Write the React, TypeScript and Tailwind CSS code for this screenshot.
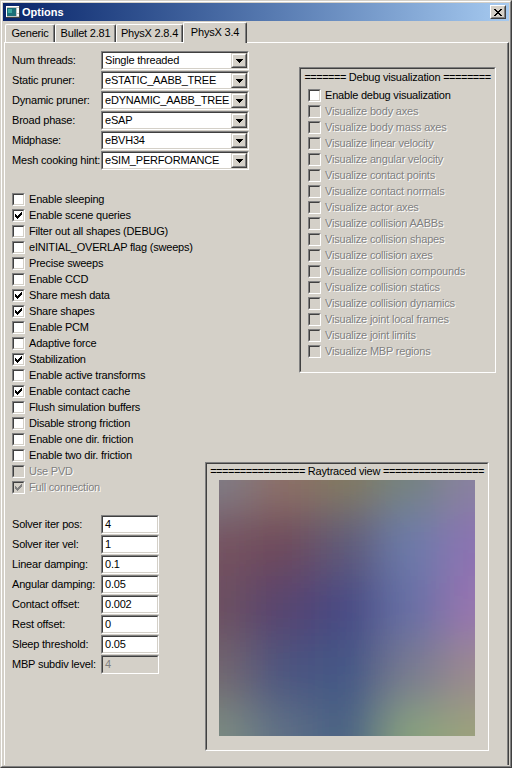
import React from 'react';

const COMBOS = [
  { label: 'Num threads:', value: 'Single threaded' },
  { label: 'Static pruner:', value: 'eSTATIC_AABB_TREE' },
  { label: 'Dynamic pruner:', value: 'eDYNAMIC_AABB_TREE' },
  { label: 'Broad phase:', value: 'eSAP' },
  { label: 'Midphase:', value: 'eBVH34' },
  { label: 'Mesh cooking hint:', value: 'eSIM_PERFORMANCE' },
];

const OPTIONS = [
  { label: 'Enable sleeping' },
  { label: 'Enable scene queries', checked: true },
  { label: 'Filter out all shapes (DEBUG)' },
  { label: 'eINITIAL_OVERLAP flag (sweeps)' },
  { label: 'Precise sweeps' },
  { label: 'Enable CCD' },
  { label: 'Share mesh data', checked: true },
  { label: 'Share shapes', checked: true },
  { label: 'Enable PCM' },
  { label: 'Adaptive force' },
  { label: 'Stabilization', checked: true },
  { label: 'Enable active transforms' },
  { label: 'Enable contact cache', checked: true },
  { label: 'Flush simulation buffers' },
  { label: 'Disable strong friction' },
  { label: 'Enable one dir. friction' },
  { label: 'Enable two dir. friction' },
  { label: 'Use PVD', disabled: true },
  { label: 'Full connection', checked: true, disabled: true },
];

const EDITS = [
  { label: 'Solver iter pos:', value: '4' },
  { label: 'Solver iter vel:', value: '1' },
  { label: 'Linear damping:', value: '0.1' },
  { label: 'Angular damping:', value: '0.05' },
  { label: 'Contact offset:', value: '0.002' },
  { label: 'Rest offset:', value: '0' },
  { label: 'Sleep threshold:', value: '0.05' },
  { label: 'MBP subdiv level:', value: '4', disabled: true },
];

const DEBUG = [
  'Visualize body axes',
  'Visualize body mass axes',
  'Visualize linear velocity',
  'Visualize angular velocity',
  'Visualize contact points',
  'Visualize contact normals',
  'Visualize actor axes',
  'Visualize collision AABBs',
  'Visualize collision shapes',
  'Visualize collision axes',
  'Visualize collision compounds',
  'Visualize collision statics',
  'Visualize collision dynamics',
  'Visualize joint local frames',
  'Visualize joint limits',
  'Visualize MBP regions',
];

// rough colour samples of the rendered frame, blurred together below
const RAY = [
  ['#807d86', '#8e7068', '#827a60', '#748480', '#8a82a0'],
  ['#765260', '#6e4a5a', '#5e5a78', '#6c7caa', '#8c72b2'],
  ['#6c5060', '#564270', '#464884', '#6670a6', '#9874b0'],
  ['#726670', '#4c5480', '#425686', '#787a90', '#9c8a90'],
  ['#7c8c82', '#5e7086', '#4a6284', '#88a27e', '#9ca27c'],
];

const CHECK = ['......#', '.....##', '#...###', '##.###.', '#####..', '.###...', '..#....'];
const ARROW = ['#######', '.#####.', '..###..', '...#...'];
const CROSS = ['##....##', '.##..##.', '..####..', '...##...', '..####..', '.##..##.', '##....##'];

function Pixels({ rows, color }: { rows: string[]; color: string }) {
  const w = rows[0].length;
  const h = rows.length;
  return (
    <svg width={w} height={h} viewBox={`0 0 ${w} ${h}`} shapeRendering="crispEdges">
      {rows.flatMap((row, y) =>
        row.split('').map((c, x) =>
          c === '#' ? <rect key={`${x}-${y}`} x={x} y={y} width={1} height={1} fill={color} /> : null
        )
      )}
    </svg>
  );
}

function Check({ label, checked, disabled }: { label: string; checked?: boolean; disabled?: boolean }) {
  return (
    <div className="flex h-[16px] items-center whitespace-nowrap">
      <div className="h-[13px] w-[13px] shrink-0 border border-t-[#808080] border-l-[#808080] border-r-white border-b-white">
        <div
          className={
            disabled
              ? 'flex h-full w-full items-center justify-center border border-t-[#404040] border-l-[#404040] border-r-[#d4d0c8] border-b-[#d4d0c8] bg-[#d4d0c8]'
              : 'flex h-full w-full items-center justify-center border border-t-[#404040] border-l-[#404040] border-r-[#d4d0c8] border-b-[#d4d0c8] bg-white'
          }
        >
          {checked && <Pixels rows={CHECK} color={disabled ? '#808080' : '#000000'} />}
        </div>
      </div>
      <span className={disabled ? 'ml-[4px] text-[#808080] [text-shadow:1px_1px_0_#ffffff]' : 'ml-[4px]'}>{label}</span>
    </div>
  );
}

function Combo({ value }: { value: string }) {
  return (
    <div className="h-[19px] w-[148px] shrink-0 border border-t-[#808080] border-l-[#808080] border-r-white border-b-white">
      <div className="flex h-full items-center border border-t-[#404040] border-l-[#404040] border-r-[#d4d0c8] border-b-[#d4d0c8] bg-white">
        <span className="flex-1 overflow-hidden whitespace-nowrap pl-[2px]">{value}</span>
        <div className="h-full w-[16px] border border-t-[#d4d0c8] border-l-[#d4d0c8] border-r-[#404040] border-b-[#404040]">
          <div className="flex h-full items-center justify-center border border-t-white border-l-white border-r-[#808080] border-b-[#808080] bg-[#d4d0c8]">
            <Pixels rows={ARROW} color="#000000" />
          </div>
        </div>
      </div>
    </div>
  );
}

function Edit({ value, disabled }: { value: string; disabled?: boolean }) {
  return (
    <div className="h-[19px] w-[58px] shrink-0 border border-t-[#808080] border-l-[#808080] border-r-white border-b-white">
      <div
        className={
          disabled
            ? 'flex h-full items-center border border-t-[#404040] border-l-[#404040] border-r-[#d4d0c8] border-b-[#d4d0c8] bg-[#d4d0c8] pl-[2px] text-[#808080]'
            : 'flex h-full items-center border border-t-[#404040] border-l-[#404040] border-r-[#d4d0c8] border-b-[#d4d0c8] bg-white pl-[2px]'
        }
      >
        {value}
      </div>
    </div>
  );
}

function GroupTitle({ left, text, right }: { left: number; text: string; right: number }) {
  return (
    <div className="flex h-[15px] items-center justify-center whitespace-nowrap">
      <span className="tracking-[-0.5px]">{'='.repeat(left)}</span>
      <span>&nbsp;{text}&nbsp;</span>
      <span className="tracking-[-0.5px]">{'='.repeat(right)}</span>
    </div>
  );
}

function Raytrace() {
  return (
    <svg width={256} height={256} viewBox="0 0 256 256">
      <defs>
        <filter id="soft" filterUnits="userSpaceOnUse" x={-200} y={-200} width={656} height={656}>
          <feGaussianBlur stdDeviation={23} />
        </filter>
      </defs>
      <g filter="url(#soft)">
        {RAY.map((row, j) =>
          row.map((c, i) => {
            const x0 = i === 0 ? -160 : i * 64 - 32;
            const x1 = i === 4 ? 416 : i * 64 + 32;
            const y0 = j === 0 ? -160 : j * 64 - 32;
            const y1 = j === 4 ? 416 : j * 64 + 32;
            return <rect key={`${i}-${j}`} x={x0} y={y0} width={x1 - x0} height={y1 - y0} fill={c} />;
          })
        )}
      </g>
    </svg>
  );
}

function AppIcon() {
  return (
    <svg width={16} height={16} viewBox="0 0 16 16" shapeRendering="crispEdges">
      <rect x={1} y={2} width={14} height={12} fill="#c0c0c0" />
      <rect x={1} y={2} width={14} height={1} fill="#ffffff" />
      <rect x={1} y={2} width={1} height={12} fill="#ffffff" />
      <rect x={2} y={4} width={9} height={8} fill="#1c6f78" />
      <rect x={3} y={5} width={4} height={4} fill="#3aa6a0" />
      <rect x={12} y={4} width={2} height={5} fill="#ffffff" />
      <rect x={12} y={10} width={2} height={2} fill="#ffffff" />
      <rect x={1} y={13} width={14} height={1} fill="#404040" />
      <rect x={14} y={2} width={1} height={12} fill="#404040" />
    </svg>
  );
}

const TABS = [
  { label: 'Generic', w: 'w-[50px]' },
  { label: 'Bullet 2.81', w: 'w-[61px]' },
  { label: 'PhysX 2.8.4', w: 'w-[67px]' },
];

export default function App() {
  return (
    <div className="h-[768px] w-[512px] overflow-hidden border border-t-[#d4d0c8] border-l-[#d4d0c8] border-r-[#404040] border-b-[#404040] bg-[#d4d0c8] font-['Liberation_Sans',Arial,sans-serif] text-[11px] leading-[13px] tracking-[-0.2px] text-black">
      <div className="flex h-full flex-col border border-t-white border-l-white border-r-[#808080] border-b-[#808080] p-[1px]">
        {/* caption */}
        <div className="flex h-[18px] shrink-0 items-center bg-linear-to-r from-[#0a246a] to-[#a6caf0] pl-[2px] pr-[3px]">
          <AppIcon />
          <span className="ml-[1px] flex-1 font-bold tracking-normal text-white">Options</span>
          <div className="h-[14px] w-[16px] border border-t-white border-l-white border-r-[#404040] border-b-[#404040]">
            <div className="flex h-full items-center justify-center border border-t-[#d4d0c8] border-l-[#d4d0c8] border-r-[#808080] border-b-[#808080] bg-[#d4d0c8]">
              <Pixels rows={CROSS} color="#000000" />
            </div>
          </div>
        </div>

        {/* tabs */}
        <div className="mt-[1px] flex h-[20px] shrink-0 items-end pl-[2px]">
          {TABS.map((t) => (
            <div
              key={t.label}
              className={`${t.w} flex h-[18px] items-center justify-center rounded-t-[2px] border-t border-l border-r border-t-white border-l-white border-r-[#404040] shadow-[inset_-1px_0_0_#808080]`}
            >
              {t.label}
            </div>
          ))}
          <div className="relative z-10 -mb-[1px] flex h-[21px] w-[64px] items-center justify-center rounded-t-[2px] border-t border-l border-r border-t-white border-l-white border-r-[#404040] bg-[#d4d0c8] pb-[2px] shadow-[inset_-1px_0_0_#808080]">
            PhysX 3.4
          </div>
        </div>

        {/* page */}
        <div className="ml-[1px] flex flex-1 border-t border-l border-r border-t-white border-l-white border-r-[#404040] pl-[7px] pt-[8px] shadow-[inset_-1px_0_0_#808080]">
          <div className="flex w-[193px] shrink-0 flex-col">
            <div className="flex flex-col gap-[1px]">
              {COMBOS.map((c) => (
                <div key={c.label} className="flex h-[19px] items-center">
                  <span className="w-[89px] shrink-0 whitespace-nowrap">{c.label}</span>
                  <Combo value={c.value} />
                </div>
              ))}
            </div>

            <div className="mt-[21px] flex flex-col">
              {OPTIONS.map((o) => (
                <Check key={o.label} label={o.label} checked={o.checked} disabled={o.disabled} />
              ))}
            </div>

            <div className="mt-[20px] flex flex-col gap-[1px]">
              {EDITS.map((e) => (
                <div key={e.label} className="flex h-[19px] items-center">
                  <span className="w-[89px] shrink-0 whitespace-nowrap">{e.label}</span>
                  <Edit value={e.value} disabled={e.disabled} />
                </div>
              ))}
            </div>
          </div>

          <div className="flex flex-col">
            <div className="ml-[94px] mt-[16px] h-[306px] w-[197px] border border-t-[#808080] border-l-[#808080] border-r-white border-b-white">
              <div className="h-full border border-t-[#404040] border-l-[#404040] border-r-[#d4d0c8] border-b-[#d4d0c8]">
                <div className="mt-[1px]">
                  <GroupTitle left={7} text="Debug visualization" right={8} />
                </div>
                <div className="mt-[2px] flex flex-col pl-[7px]">
                  <Check label="Enable debug visualization" />
                  {DEBUG.map((d) => (
                    <Check key={d} label={d} disabled />
                  ))}
                </div>
              </div>
            </div>

            <div className="mt-[89px] h-[289px] w-[284px] border border-t-[#808080] border-l-[#808080] border-r-white border-b-white">
              <div className="h-full border border-t-[#404040] border-l-[#404040] border-r-[#d4d0c8] border-b-[#d4d0c8]">
                <GroupTitle left={16} text="Raytraced view" right={17} />
                <div className="ml-[12px] mt-[1px]">
                  <Raytrace />
                </div>
              </div>
            </div>
          </div>
        </div>
      </div>
    </div>
  );
}
